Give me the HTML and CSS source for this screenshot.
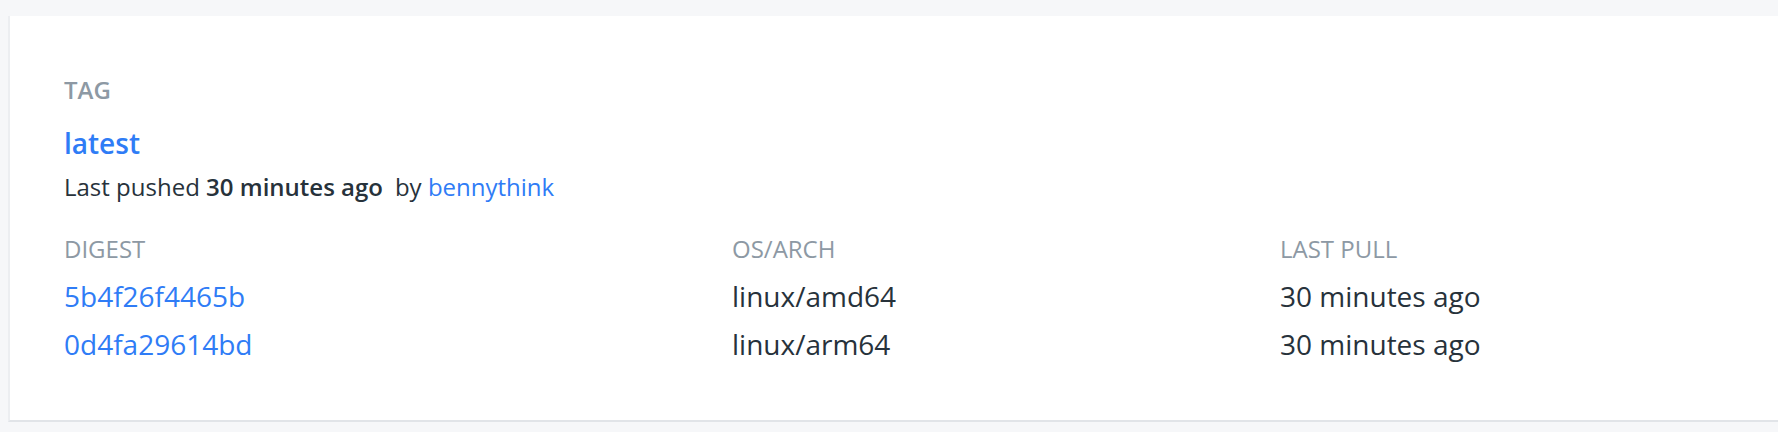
FILE: index.html
```html
<!DOCTYPE html>
<html>
<head>
<meta charset="utf-8">
<link rel="stylesheet" href="styles.css">
</head>
<body>
<div class="card">
  <div class="label label-strong">TAG</div>
  <a class="tag-name" href="#">latest</a>
  <div class="pushed">Last pushed <strong>30 minutes ago</strong><span class="by">by <a class="link" href="#">bennythink</a></span></div>
  <div class="table">
    <div class="label">DIGEST</div>
    <div class="label">OS/ARCH</div>
    <div class="label">LAST PULL</div>
    <a class="cell link" href="#">5b4f26f4465b</a>
    <div class="cell">linux/amd64</div>
    <div class="cell">30 minutes ago</div>
    <a class="cell link" href="#">0d4fa29614bd</a>
    <div class="cell">linux/arm64</div>
    <div class="cell">30 minutes ago</div>
  </div>
</div>
</body>
</html>
```
FILE: styles.css
```css
html, body {
  margin: 0;
  padding: 0;
  background: #f6f7f9;
  overflow: hidden;
}
body {
  padding: 16px 0 0 8px;
  font-family: "Open Sans", "Liberation Sans", sans-serif;
  color: #27323b;
}
.card {
  background: #ffffff;
  border-left: 2px solid #eceef1;
  border-bottom: 2px solid #e1e4e8;
  padding: 58px 0 52px 54px;
  display: flex;
  flex-direction: column;
  align-items: flex-start;
}
.label {
  font-size: 24px;
  line-height: 32px;
  color: #8d99a4;
}
.label-strong {
  font-weight: 600;
}
.tag-name {
  margin-top: 17px;
  font-size: 28px;
  line-height: 40px;
  font-weight: 600;
  color: #2f7cf6;
  text-decoration: none;
}
.pushed {
  margin-top: 8px;
  font-size: 24px;
  line-height: 32px;
  color: #27323b;
}
.pushed strong {
  font-weight: 600;
}
.by {
  margin-left: 12px;
}
.link {
  color: #2f7cf6;
  text-decoration: none;
}
.table {
  margin-top: 30px;
  display: grid;
  grid-template-columns: 668px 548px 400px;
  row-gap: 0;
}
.table .label:nth-child(-n+3) {
  margin-bottom: 7px;
}
.cell {
  font-size: 28px;
  line-height: 48px;
  color: #27323b;
}
a.cell {
  color: #2f7cf6;
}
```
